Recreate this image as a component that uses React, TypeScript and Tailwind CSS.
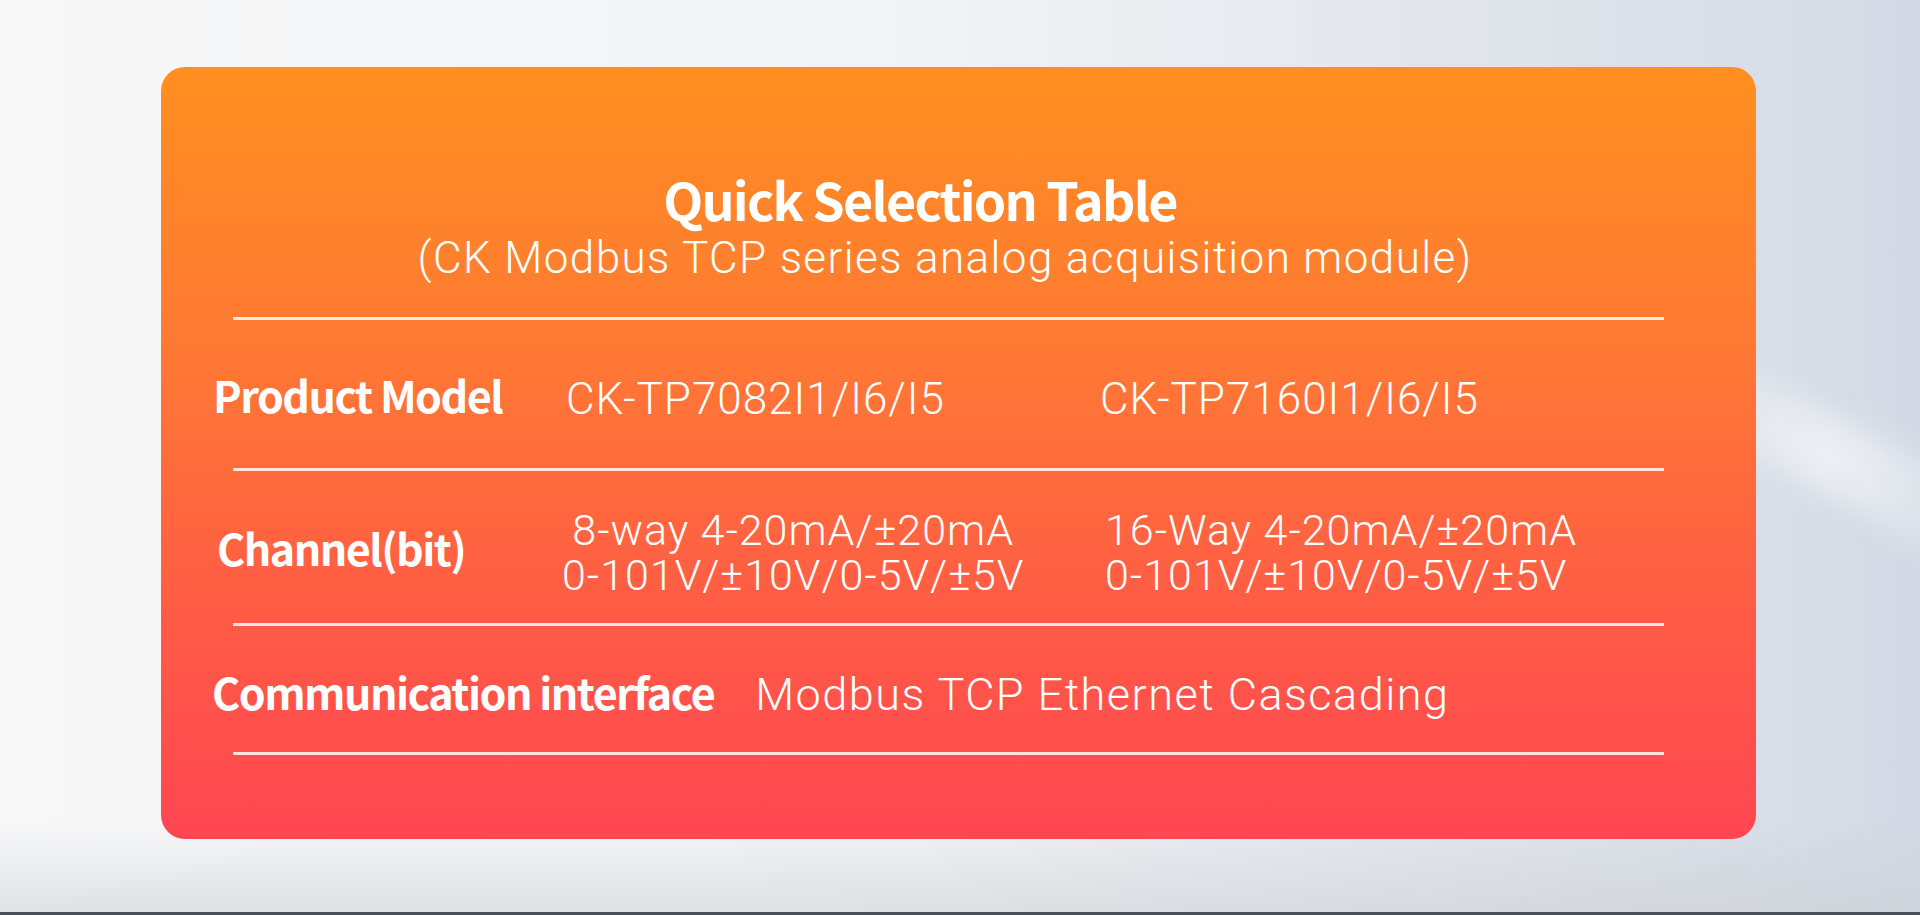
import React from 'react';

const bold = "font-['Noto_Sans_CJK_SC','Noto_Sans',sans-serif] font-bold";
const thin = "font-['Roboto','Liberation_Sans',sans-serif] font-light";

const Divider = () => <div className="ml-[72px] mr-[92px] h-[3px] bg-[#fbf4f0]/90" />;

const App = () => {
  return (
    <div className="relative h-[915px] w-[1920px] overflow-hidden bg-[linear-gradient(90deg,#f8f8f9_0%,#f3f4f5_45%,#e2e6ec_75%,#d3dae5_100%)]">
      {/* soft light streak on the right */}
      <div className="pointer-events-none absolute right-[-120px] top-[420px] h-[70px] w-[420px] rotate-[28deg] bg-[linear-gradient(90deg,transparent,rgba(255,255,255,0.55),transparent)] blur-[14px]" />
      <div className="pointer-events-none absolute bottom-[3px] left-0 h-[90px] w-full bg-[linear-gradient(0deg,rgba(205,207,212,0.55),transparent)]" />

      <div className="relative pl-[161px] pt-[67px]">
        <div className="h-[772px] w-[1595px] rounded-[24px] bg-[linear-gradient(180deg,#ff8f1f_0%,#ff7a33_35%,#ff5c45_70%,#ff4652_100%)] text-white">
          <div className="pt-[102px] text-center">
            <h1 className={`${bold} pr-[77px] text-[52px] leading-[60px] tracking-[-1.75px]`}>Quick Selection Table</h1>
            <p className={`${thin} mt-[5px] pr-[27px] text-[44px] leading-[48px] tracking-[1.4px]`}>(CK Modbus TCP series analog acquisition module)</p>
          </div>

          <div className="mt-[35px]">
            <Divider />

            <div className="flex h-[148px] items-center pl-[52px]">
              <div className={`${bold} w-[353px] text-[43px] tracking-[-1.5px]`}>Product Model</div>
              <div className={`${thin} w-[534px] pt-[9px] text-[44px] tracking-[1px]`}>CK-TP7082I1/I6/I5</div>
              <div className={`${thin} pt-[9px] text-[44px] tracking-[1px]`}>CK-TP7160I1/I6/I5</div>
            </div>

            <Divider />

            <div className="flex h-[152px] items-center pl-[56px]">
              <div className={`${bold} w-[345px] text-[43px] tracking-[-1.5px]`}>Channel(bit)</div>
              <div className="w-[543px] pt-[12px]">
                <div className={`${thin} inline-flex flex-col items-center text-[43px] leading-[45px] tracking-[1px]`}>
                  <span>8-way 4-20mA/±20mA</span>
                  <span>0-101V/±10V/0-5V/±5V</span>
                </div>
              </div>
              <div className={`${thin} flex flex-col pt-[12px] text-[43px] leading-[45px] tracking-[1px]`}>
                <span>16-Way 4-20mA/±20mA</span>
                <span>0-101V/±10V/0-5V/±5V</span>
              </div>
            </div>

            <Divider />

            <div className="flex h-[126px] items-center gap-[41px] pl-[51px]">
              <div className={`${bold} pt-[4px] text-[43px] tracking-[-1.5px]`}>Communication interface</div>
              <div className={`${thin} pt-[12px] text-[45px] tracking-[1.5px]`}>Modbus TCP Ethernet Cascading</div>
            </div>

            <Divider />
          </div>
        </div>
      </div>

      <div className="absolute bottom-0 left-0 h-[3px] w-full bg-[#4b5058]" />
    </div>
  );
};

export default App;
